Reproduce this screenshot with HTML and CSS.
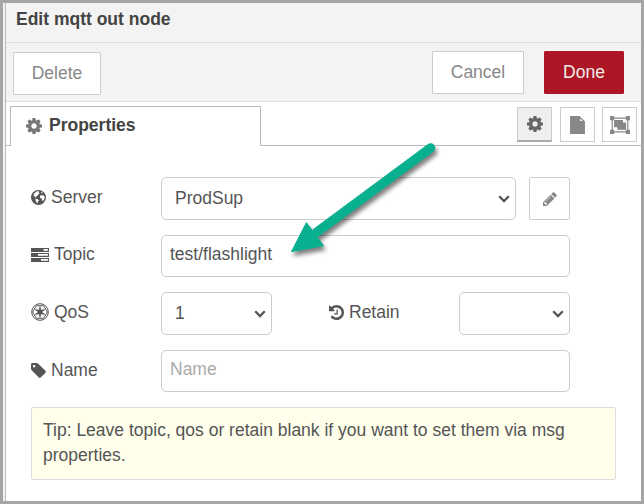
FILE: index.html
```html
<!DOCTYPE html>
<html lang="en">
<head>
<meta charset="utf-8">
<title>Edit mqtt out node</title>
<link rel="stylesheet" href="styles.css">
</head>
<body>
<svg class="defs" width="0" height="0">
  <symbol id="gear" viewBox="128 128 1536 1536"><path d="M1152 896q0-106-75-181t-181-75-181 75-75 181 75 181 181 75 181-75 75-181zm512-109v222q0 12-8 23t-20 13l-185 28q-19 54-39 91 35 50 107 138 10 12 10 25t-9 23q-27 37-99 108t-94 71q-12 0-26-9l-138-108q-44 23-91 38-16 136-29 186-7 28-36 28h-222q-14 0-24.5-8.5t-11.500-21.500l-28-184q-49-16-90-37l-141 107q-10 9-25 9-14 0-25-11-126-114-165-168-7-10-7-23 0-12 8-23 15-21 51-66.500t54-70.500q-27-50-41-99l-183-27q-13-2-21-12.500t-8-23.500v-222q0-12 8-23t19-13l186-28q14-46 39-92-40-57-107-138-10-12-10-24 0-10 9-23 26-36 98.500-107.500t94.500-71.500q13 0 26 10l138 107q44-23 91-38 16-136 29-186 7-28 36-28h222q14 0 24.500 8.500t11.500 21.500l28 184q49 16 90 37l142-107q9-9 24-9 13 0 25 10 129 119 165 170 7 8 7 22 0 12-8 23-15 21-51 66.500t-54 70.500q26 50 41 98l183 28q13 2 21 12.500t8 23.500z"/></symbol>
  <symbol id="chevron" viewBox="0 0 12 8"><path d="M1.200 1.200L6 6l4.800-4.800" fill="none" stroke="currentColor" stroke-width="2.300"/></symbol>
</svg>
<div class="dialog">
  <h1 class="title">Edit mqtt out node</h1>
  <div class="toolbar">
    <button class="btn delete">Delete</button>
    <button class="btn cancel">Cancel</button>
    <button class="btn primary">Done</button>
  </div>
  <div class="tabs">
    <div class="tab"><svg class="tab-icon"><use href="#gear"/></svg>Properties</div>
    <div class="tab-fill">
      <button class="square active"><svg width="16" height="16"><use href="#gear"/></svg></button>
      <button class="square"><svg width="15" height="18" viewBox="0 0 15 18" fill="none" stroke="currentColor" stroke-width="1.300"><path d="M.7.700h8.600l5 5v11.600H.7zM9.300.700v5h5M3.500 8h8M3.500 10.800h8M3.500 13.600h8"/></svg></button>
      <button class="square"><svg width="20" height="18" viewBox="0 0 20 18" fill="none" stroke="currentColor" stroke-width="1.200"><path d="M2.200 3.500v11M17.800 3.500v11M3.500 2.200h13M3.500 15.800h13M.6.600h3v3h-3zM16.400.600h3v3h-3zM.6 14.400h3v3h-3zM16.400 14.400h3v3h-3zM4.700 4.600h7.600v6H4.700zM12.500 7.200h3v6H8v-2.600"/></svg></button>
    </div>
  </div>
  <form class="form">
    <div class="row">
      <label class="label"><svg width="15" height="15" viewBox="0 0 15 15"><circle cx="7.500" cy="7.500" r="7.500"/><path fill="#fff" d="M6 1.200l2 .1-.5 1.300 1.300.600-1.500 1-.8 1.500-1.600.800.600 1.100-1.600-.300-.6-1.500L2.400 5.600l.8-2.200zM9.600 1.500l2.400 1.600-1.300.4zM9 5.700l2-.700 2.500.9.100 2.600-1.300 2.200-1.300-.3-.3-1.900-1.700-.7zM4.300 8.700l2.300.500 1.500 1.400-1.200 1-.4 1.900-1.500-1.700z"/></svg>Server</label>
      <div class="select server"><select><option>ProdSup</option></select><svg class="chevron"><use href="#chevron"/></svg></div>
      <button type="button" class="square pencil"><svg width="14" height="14" viewBox="128 128 1536 1536"><path d="M491 1536l91-91-235-235-91 91v107h128v128h107zm523-928q0-22-22-22-10 0-17 7l-542 542q-7 7-7 17 0 22 22 22 10 0 17-7l542-542q7-7 7-17zm-54-192l416 416-832 832h-416v-416zm683 96q0 53-37 90l-166 166-416-416 166-165q36-38 90-38 53 0 91 38l235 234q37 39 37 91z"/></svg></button>
    </div>
    <div class="row">
      <label class="label"><svg width="18" height="14" viewBox="0 0 18 14"><path fill-rule="evenodd" d="M0 0h18v4H0zM12.500 1.100h4.400v1.700h-4.400zM0 5h18v4H0zM7 6.100h9.900v1.700H7zM0 10h18v4H0zM10 11.100h6.900v1.700H10z"/></svg>Topic</label>
      <input class="input" value="test/flashlight">
    </div>
    <div class="row">
      <label class="label"><svg width="18" height="18" viewBox="-9 -9 18 18"><circle r="8.300" fill="none" stroke="currentColor" stroke-width="1"/><path fill="none" stroke="currentColor" stroke-width="1" d="M-3.400-6.300h6.800L7-1v2L3.400 6.300h-6.800L-7 1v-2z"/><circle r="2.700"/><path stroke="currentColor" stroke-width="1.500" d="M0-5.200v10.400M-4.500-2.600l9 5.200M-4.500 2.600l9-5.200"/></svg>QoS</label>
      <div class="select small"><select><option>1</option></select><svg class="chevron"><use href="#chevron"/></svg></div>
      <label class="label retain"><svg width="15" height="15" viewBox="128 128 1536 1536"><path d="M1664 896q0 156-61 298t-164 245-245 164-298 61q-172 0-327-72.500t-264-204.500q-7-10-6.500-22.500t8.500-20.500l137-138q10-9 25-9 16 2 23 12 73 95 179 147t225 52q104 0 198.500-40.500t163.500-109.500 109.500-163.500 40.500-198.500-40.500-198.500-109.500-163.500-163.500-109.500-198.500-40.500q-98 0-188 35.500t-160 101.500l137 138q31 30 14 69-17 40-59 40h-448q-26 0-45-19t-19-45v-448q0-42 40-59 39-17 69 14l130 129q107-101 244.500-156.500t284.500-55.500q156 0 298 61t245 164 164 245 61 298zm-640-288v448q0 14-9 23t-23 9h-320q-14 0-23-9t-9-23v-64q0-14 9-23t23-9h224v-352q0-14 9-23t23-9h64q14 0 23 9t9 23z"/></svg>Retain</label>
      <div class="select small"><select><option></option></select><svg class="chevron"><use href="#chevron"/></svg></div>
    </div>
    <div class="row">
      <label class="label"><svg width="15" height="15" viewBox="128 128 1536 1536"><path d="M576 448q0-53-37.500-90.500t-90.500-37.500-90.500 37.500-37.500 90.500 37.500 90.500 90.500 37.500 90.500-37.500 37.500-90.500zm1067 576q0 53-37 90l-491 492q-39 37-91 37-53 0-90-37l-715-716q-38-37-64.500-101t-26.500-117v-416q0-52 38-90t90-38h416q53 0 117 26.500t102 64.500l715 714q37 39 37 91z"/></svg>Name</label>
      <input class="input" placeholder="Name">
    </div>
    <div class="tip">Tip: Leave topic, qos or retain blank if you want to set them via msg properties.</div>
  </form>
</div>
<svg class="arrow" width="170" height="140" viewBox="280 130 170 140"><path d="M430.500 148L317 232" stroke="#08b08f" stroke-width="9.500" stroke-linecap="round"/><path fill="#08b08f" d="M291 252l15.500-30 17.500 24z M306.500 222l17.500 24-33 6zM306.500 222l17.500 24-33 6z"/><path fill="#08b08f" d="M291 252l15-29.500 18 23.500z"/></svg>
</body>
</html>
```
FILE: styles.css
```css
* { box-sizing: border-box; }
body {
  margin: 0;
  width: 644px;
  height: 504px;
  border: 3px solid #a5a5a5;
  background: #f3f3f3;
  padding-left: 2px;
  overflow: hidden;
  font: 17.5px/25px "Liberation Sans", Arial, sans-serif;
  color: #555;
}
.defs { position: absolute; }
svg { fill: currentColor; flex: none; }
button, input, select { font: inherit; color: inherit; margin: 0; }
.dialog {
  height: 498px;
  border-left: 1px solid #bbb;
  background: #fff;
}
.title {
  margin: 0;
  height: 40px;
  padding: 3px 10px 0;
  font-size: 17.5px;
  line-height: 26px;
  color: #444;
  background: #f3f3f3;
  border-bottom: 1px solid #ddd;
}
.toolbar {
  display: flex;
  height: 59px;
  padding: 8px 17px 0 7px;
  background: #f3f3f3;
  border-bottom: 1px solid #ddd;
}
.btn {
  width: 92px;
  height: 43px;
  padding: 0;
  border: 1px solid #ccc;
  border-radius: 1px;
  background: #fff;
  color: #888;
}
.delete { width: 88px; margin: 1px auto 0 0; }
.primary { width: 80px; margin-left: 20px; background: #ad1625; border-color: #ad1625; color: #eee; }
.tabs { display: flex; height: 44px; padding: 4px 0 0; }
.tabs::before { content: ""; width: 4px; border-bottom: 1px solid #bbb; }
.tab {
  display: flex;
  align-items: center;
  width: 251px;
  padding: 0 0 2px 15px;
  border: 1px solid #bbb;
  border-bottom: 0;
  font-weight: bold;
  color: #444;
}
.tab-icon { width: 16px; height: 16px; margin-right: 7px; color: #777; }
.tab-fill {
  flex: 1;
  display: flex;
  justify-content: flex-end;
  gap: 7px;
  padding: 1px 4px 0 0;
  border-bottom: 1px solid #bbb;
}
.square {
  display: flex;
  align-items: center;
  justify-content: center;
  width: 35px;
  height: 35px;
  padding: 0;
  border: 1px solid #ccc;
  background: #fff;
  color: #888;
}
.active { background: #efefef; border-bottom: 2px solid #aaa; color: #666; margin-right: 1px; }
.form {
  display: flex;
  flex-direction: column;
  gap: 15px;
  padding: 31px 0 0 25px;
}
.row { display: flex; height: 42.600px; }
.label { display: flex; align-items: center; gap: 5px; width: 130px; padding-bottom: 2px; }
.retain { width: 130px; margin-left: 57px; }
.select { position: relative; }
.server { width: 355px; }
.small { width: 111px; }
.select select {
  appearance: none;
  width: 100%;
  height: 100%;
  padding: 0 13px;
  border: 1px solid #ccc;
  border-radius: 5px;
  background: #fff;
}
.chevron { position: absolute; right: 6px; top: 18px; width: 12px; height: 8px; }
.pencil { width: 41px; height: 43px; margin-left: 13px; border-radius: 2px; }
.input {
  width: 409px;
  height: 42px;
  padding: 0 8px 2px;
  border: 1px solid #ccc;
  border-radius: 5px;
}
.input::placeholder { color: #aaa; }
.tip {
  width: 585px;
  height: 73px;
  padding: 10px 11px;
  border: 1px solid #ddd;
  border-radius: 2px;
  background: #ffffec;
}
.arrow {
  position: absolute;
  left: 280px;
  top: 130px;
  filter: drop-shadow(2px 4px 2px rgba(0, 0, 0, .5));
}
```
